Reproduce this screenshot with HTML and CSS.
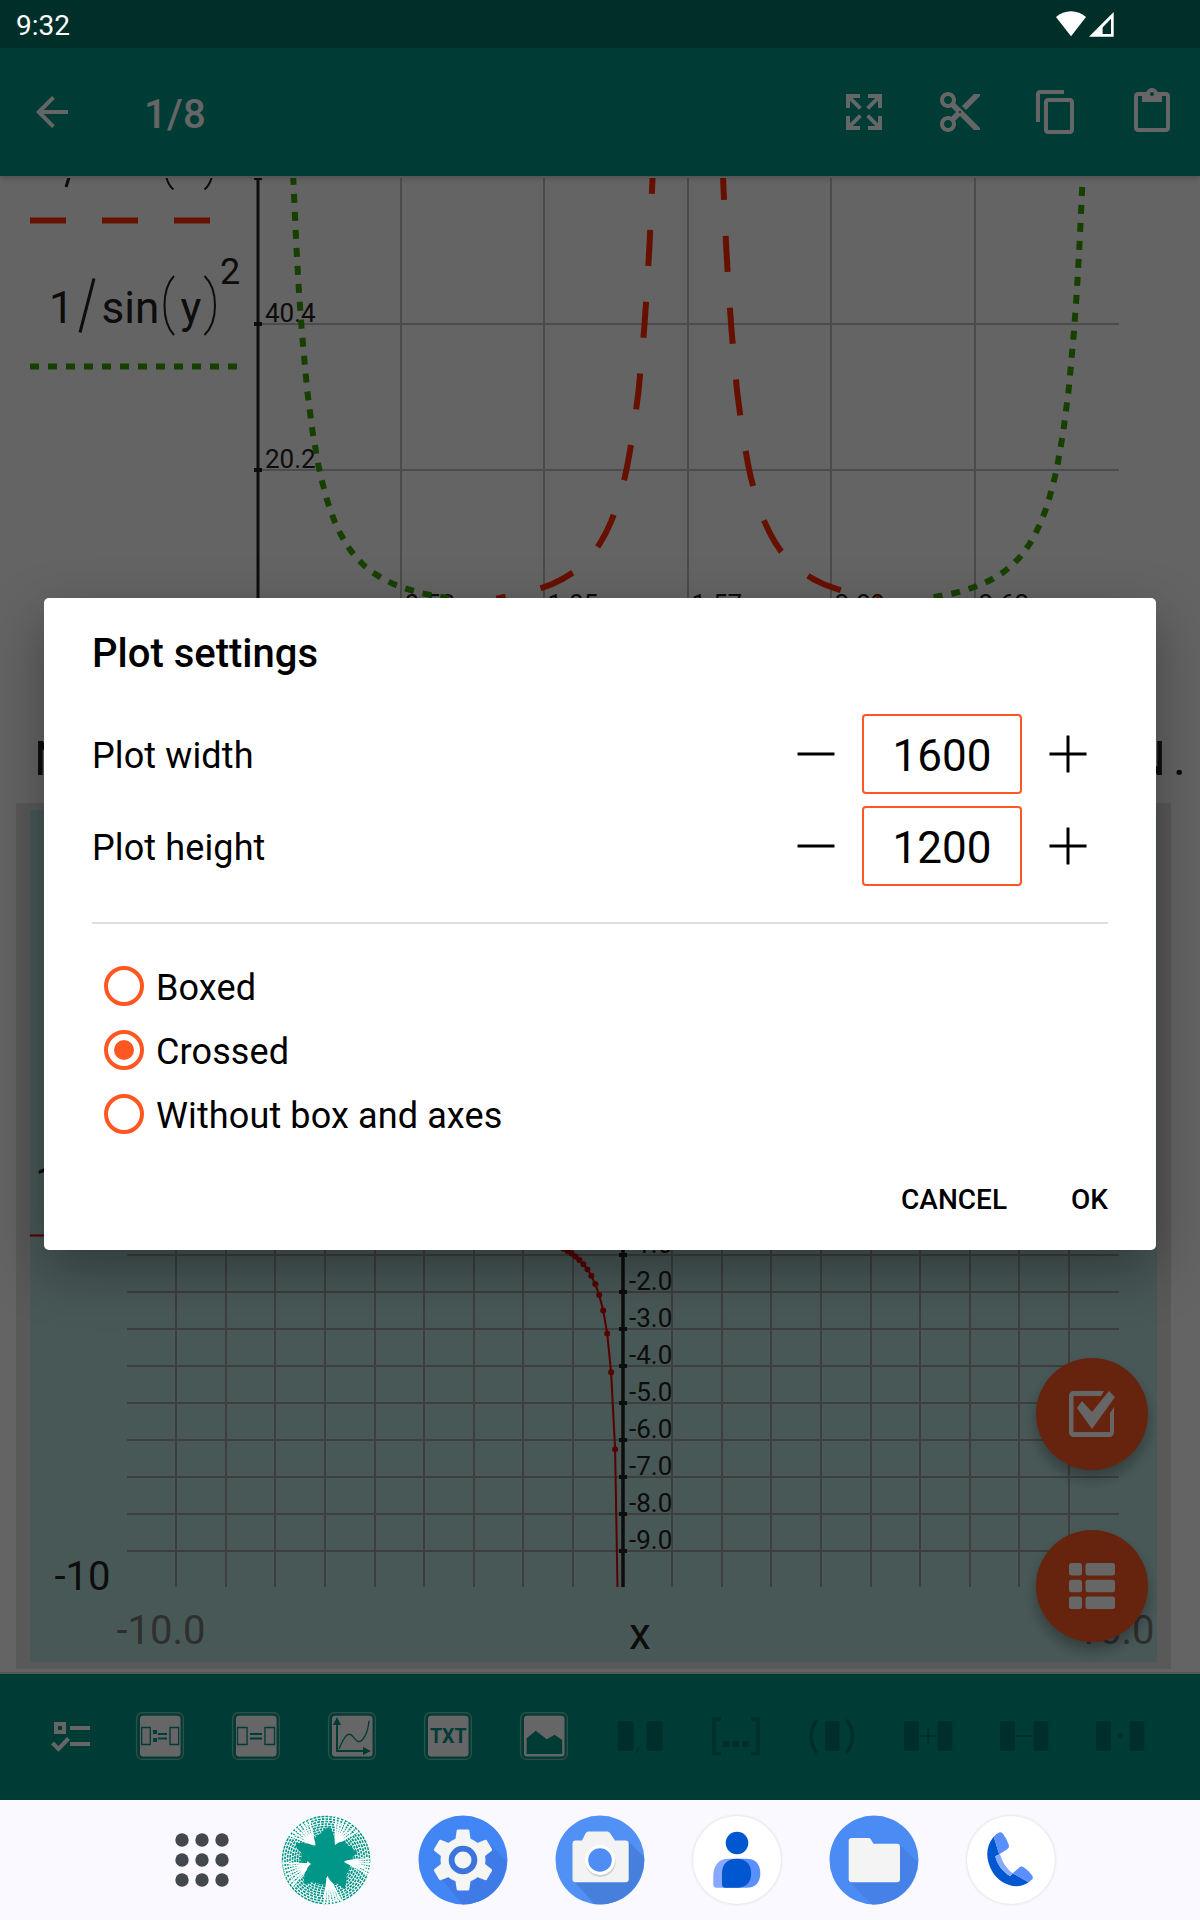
FILE: index.html
```html
<!DOCTYPE html>
<html lang="en">
<head>
<meta charset="utf-8">
<title>Plot settings</title>
<link rel="stylesheet" href="styles.css">
</head>
<body>
<div class="screen">
  <header class="status">
    <span class="clock">9:32</span>
    <svg class="signals" width="58" height="26" viewBox="0 0 58 26" fill="#fff">
      <path d="M15 25.2L0 6C4.300 2.400 9.300 .3 15 .3s10.700 2.100 15 5.700z"/>
      <path fill-rule="evenodd" d="M57.700 1v24.700H33zM55 7.800l-8.400 8.800V23H55z"/>
    </svg>
  </header>

  <nav class="appbar">
    <svg class="icon" viewBox="0 0 24 24"><path d="M20 11H7.830l5.590-5.590L12 4l-8 8 8 8 1.410-1.410L7.830 13H20v-2z"/></svg>
    <span class="count">1/8</span>
    <div class="actions">
      <svg class="icon" viewBox="0 0 24 24"><path d="M9.500 13.090L10.910 14.500L6.410 19H10V21H3V14H5V17.590L9.500 13.090M10.910 9.500L9.500 10.910L5 6.410V10H3V3H10V5H6.410L10.910 9.500M14.500 13.090L19 17.590V14H21V21H14V19H17.590L13.090 14.500L14.500 13.090M13.090 9.500L17.590 5H14V3H21V10H19V6.410L14.500 10.910L13.090 9.500Z"/></svg>
      <svg class="icon" viewBox="0 0 24 24"><path d="M9.640 7.640c.23-.5.36-1.050.36-1.640 0-2.210-1.790-4-4-4S2 3.790 2 6s1.790 4 4 4c.59 0 1.140-.13 1.640-.36L10 12l-2.360 2.360C7.140 14.130 6.590 14 6 14c-2.210 0-4 1.790-4 4s1.790 4 4 4 4-1.790 4-4c0-.59-.13-1.140-.36-1.640L12 14l7 7h3v-1L9.640 7.640zM6 8c-1.100 0-2-.89-2-2s.9-2 2-2 2 .89 2 2-.9 2-2 2zm0 12c-1.100 0-2-.89-2-2s.9-2 2-2 2 .89 2 2-.9 2-2 2zm6-7.500c-.28 0-.5-.22-.5-.5s.22-.5.5-.5.5.22.5.5-.22.5-.5.5zM19 3l-6 6 2 2 7-7V3z"/></svg>
      <svg class="icon" viewBox="0 0 24 24"><path d="M16 1H4c-1.100 0-2 .9-2 2v14h2V3h12V1zm3 4H8c-1.100 0-2 .9-2 2v14c0 1.100.9 2 2 2h11c1.100 0 2-.9 2-2V7c0-1.100-.9-2-2-2zm0 16H8V7h11v14z"/></svg>
      <svg class="icon" viewBox="0 0 24 24"><path d="M19 2h-4.180C14.400.84 13.300 0 12 0c-1.300 0-2.400.84-2.820 2H5c-1.100 0-2 .9-2 2v16c0 1.100.9 2 2 2h14c1.100 0 2-.9 2-2V4c0-1.100-.9-2-2-2zm-7 0c.55 0 1 .45 1 1s-.45 1-1 1-1-.45-1-1 .45-1 1-1zm7 18H5V4h2v3h10V4h2v16z"/></svg>
    </div>
  </nav>

  <main class="sheet">
    <svg class="plot" width="1200" height="522" viewBox="0 178 1200 522">
      <g class="grid">
        <path d="M401 178V616M544 178V616M688 178V616M831 178V616M975 178V616M258 324H1119M258 470H1119"/>
      </g>
      <path class="axis" d="M258 178V616"/>
      <path class="tick" d="M254 178H262M254 324H262M254 470H262"/>
      <g class="tick-text">
        <text x="265" y="321.700">40.4</text>
        <text x="265" y="468">20.2</text>
        <text x="404.500" y="612.500">0.52</text>
        <text x="547.500" y="612.500">1.05</text>
        <text x="691.500" y="612.500">1.57</text>
        <text x="834.500" y="612.500">2.09</text>
        <text x="978.500" y="612.500">2.62</text>
      </g>
      <g class="red-dash">
        <path d="M653.300 158L652.200 185.900 649.500 244.800 646.800 292.300 644 331.200 638.600 390.500 633.100 432.800 627.600 464.200 624.900 476.900 619.400 497.900 615.300 510.600 611.200 521.400 605.700 533.200 600.200 542.900 594.800 551 589.300 557.800 581.100 566 572.900 572.500 561.900 579.300 551 584.600 537.300 589.500 523.600 593.300 496.300 598.600"/>
        <path d="M722.500 164L723.400 185.900 726.100 244.800 728.800 292.300 731.600 331.200 737 390.500 742.500 432.800 748 464.200 750.700 476.900 756.200 497.900 760.300 510.600 764.400 521.400 769.900 533.200 775.400 542.900 780.800 551 786.300 557.800 794.500 566 802.700 572.500 813.700 579.300 824.600 584.600 838.300 589.500 852 593.300 879.300 598.600"/>
        <path d="M30 220.500H210"/>
      </g>
      <g class="green-dash">
        <path d="M293.200 176L293.600 185.900 296.300 244.800 299 292.300 301.800 331.200 307.200 390.500 312.700 432.800 318.200 464.200 320.900 476.900 326.400 497.900 330.500 510.600 334.600 521.400 340.100 533.200 345.600 542.900 351 551 356.500 557.800 364.700 566 372.900 572.500 383.900 579.300 394.800 584.600 408.500 589.500 422.200 593.300 449.500 598.600"/>
        <path d="M1082.200 187L1079.500 244.800 1076.800 292.300 1074 331.200 1068.600 390.500 1063.100 432.800 1057.600 464.200 1054.900 476.900 1049.400 497.900 1045.300 510.600 1041.200 521.400 1035.700 533.200 1030.200 542.900 1024.800 551 1019.300 557.800 1011.100 566 1002.900 572.500 991.900 579.300 981 584.600 967.300 589.500 953.600 593.300 926.300 598.600"/>
        <path d="M30 366.500H240"/>
      </g>
      <g class="formula">
        <path d="M69.500 176L66 187"/>
        <path class="paren" d="M166 176Q168 185 173.500 189.500M212 176Q210 185 204.500 189.500"/>
        <text x="49" y="322.700">1</text>
        <path d="M94 278.500L80 332.500"/>
        <text x="101.500" y="322.700">sin</text>
        <path class="paren" d="M174 276Q164.500 286 164.500 305.500T174 335M204.500 276Q215 286 215 305.500T204.500 335"/>
        <text x="180.500" y="322.700">y</text>
        <text class="power" x="220" y="283.800">2</text>
      </g>
    </svg>

    <p class="note"><span>N</span><span>N<span class="stop">.</span></span></p>

    <section class="card">
      <svg class="plot" width="1127" height="852" viewBox="30 810 1127 852">
        <g class="grid2">
          <path d="M176 900V1587M226 900V1587M275 900V1587M325 900V1587M375 900V1587M424 900V1587M474 900V1587M523 900V1587M573 900V1587M672 900V1587M722 900V1587M771 900V1587M821 900V1587M871 900V1587M920 900V1587M970 900V1587M1019 900V1587M1069 900V1587M127 1255H1119M127 1292H1119M127 1329H1119M127 1366H1119M127 1403H1119M127 1440H1119M127 1477H1119M127 1514H1119M127 1551H1119"/>
        </g>
        <path class="axis2" d="M623 900V1587"/>
        <path class="tick" d="M619 1255H627M619 1292H627M619 1329H627M619 1366H627M619 1403H627M619 1440H627M619 1477H627M619 1514H627M619 1551H627"/>
        <g class="tick-text">
          <text x="629" y="1253">-1.0</text>
          <text x="629" y="1290">-2.0</text>
          <text x="629" y="1327">-3.0</text>
          <text x="629" y="1364">-4.0</text>
          <text x="629" y="1401">-5.0</text>
          <text x="629" y="1438">-6.0</text>
          <text x="629" y="1475">-7.0</text>
          <text x="629" y="1512">-8.0</text>
          <text x="629" y="1549">-9.0</text>
        </g>
        <path class="curve" d="M559.600 1246.900L563.600 1248.800 567.600 1251 571.500 1253.600 575.500 1256.500 579.400 1260 583.400 1264.300 587.400 1269.400 591.300 1275.800 595.300 1284.100 599.200 1295.100 603.200 1310.500 607.200 1333.600 611.100 1372.200 615.100 1449.300 617.500 1587"/>
        <path class="dots" d="M559.600 1246.900h0M563.600 1248.800h0M567.600 1251h0M571.500 1253.600h0M575.500 1256.500h0M579.400 1260h0M583.400 1264.300h0M587.400 1269.400h0M591.300 1275.800h0M595.300 1284.100h0M599.200 1295.100h0M603.200 1310.500h0M607.200 1333.600h0M611.100 1372.200h0M615.100 1449.300h0"/>
        <path class="curve" d="M30 1235.500H60"/>
        <g class="formula">
          <text x="35" y="1198">1</text>
          <text class="bound" x="54.500" y="1590">-10</text>
          <text x="629" y="1649">x</text>
          <text class="bound dim" x="116.500" y="1644">-10.0</text>
          <text class="bound dim" x="1154.500" y="1644" text-anchor="end">10.0</text>
        </g>
      </svg>
    </section>

    <div class="fabs">
      <div class="fab">
        <svg width="46" height="46" viewBox="0 0 46 46" fill="#fff">
          <path d="M35 0H5C2 0 0 2 0 5v36c0 3 2 5 5 5h35c3 0 5-2 5-5V16l-4 6v19H4.500V5H32z"/>
          <path d="M8 17l5-7 10 11L40 0l6 6-23 32z"/>
        </svg>
      </div>
      <div class="fab">
        <svg width="46" height="46" viewBox="0 0 46 46" fill="#fff">
          <rect width="13" height="12.500" rx="2.500"/><rect x="16.500" width="29.500" height="12.500" rx="2.500"/>
          <rect y="16.700" width="13" height="12.500" rx="2.500"/><rect x="16.500" y="16.700" width="29.500" height="12.500" rx="2.500"/>
          <rect y="33.500" width="13" height="12.500" rx="2.500"/><rect x="16.500" y="33.500" width="29.500" height="12.500" rx="2.500"/>
        </svg>
      </div>
    </div>
  </main>

  <nav class="toolbar">
    <svg class="tool" viewBox="0 0 48 48">
      <path fill="#fff" fill-rule="evenodd" d="M14 10h12v12H14zM18 14v4h4v-4zM30 14h20v4H30zM30 30h20v4H30z"/>
      <path fill="none" stroke="#fff" stroke-width="4" d="M12.500 31l6 6L28.500 26.500"/>
    </svg>
    <svg class="tool" viewBox="0 0 48 48">
      <rect class="frame" x=".6" y=".6" width="46.800" height="46.800" rx="6"/><rect class="tile" x="4" y="3.700" width="40.500" height="40.800" rx="3"/>
      <path class="ink" d="M5.700 15.500h8.600v17H5.700zM34 15.500h8.600v17H34z"/>
      <path class="inkfill" d="M17 18h4v4h-4zM17 26h4v4h-4zM22 21h9v2h-9zM22 25.500h9v2h-9z"/>
    </svg>
    <svg class="tool" viewBox="0 0 48 48">
      <rect class="frame" x=".6" y=".6" width="46.800" height="46.800" rx="6"/><rect class="tile" x="4" y="3.700" width="40.500" height="40.800" rx="3"/>
      <path class="ink" d="M5.500 15.500h9.600v17H5.500zM32.900 15.500h9.600v17h-9.600z"/>
      <path class="inkfill" d="M18 21h12v2H18zM18 25.500h12v2H18z"/>
    </svg>
    <svg class="tool" viewBox="0 0 48 48">
      <rect class="frame" x=".6" y=".6" width="46.800" height="46.800" rx="6"/><rect class="tile" x="4" y="3.700" width="40.500" height="40.800" rx="3"/>
      <path class="ink axes" d="M9 12v26.900H36"/>
      <path class="ink" d="M11 37C16 25 20 19 24.500 24 29 29.500 31 32 35 27 39 22 40.500 15 41 8.700"/>
      <path class="inkfill" d="M9 5l4 8H5zM43 39l-8 4v-8z"/>
    </svg>
    <svg class="tool" viewBox="0 0 48 48">
      <rect class="frame" x=".6" y=".6" width="46.800" height="46.800" rx="6"/><rect class="tile" x="4" y="3.700" width="40.500" height="40.800" rx="3"/>
      <text class="txt" x="24.200" y="31" text-anchor="middle">TXT</text>
    </svg>
    <svg class="tool" viewBox="0 0 48 48">
      <rect class="frame" x=".6" y=".6" width="46.800" height="46.800" rx="6"/><rect class="tile" x="4" y="3.700" width="40.500" height="40.800" rx="3"/>
      <path class="inkfill" d="M6.600 26.300l9.200-7.600 11 8.600 7.700-4.600 7.700 5.300v14H6.600z"/>
    </svg>
    <svg class="tool off" viewBox="0 0 48 48"><rect x="1.600" y="9" width="16" height="30" rx="2"/><rect x="30.600" y="9" width="16" height="30" rx="2"/><path class="thin" d="M22.500 35q0 3-2.500 6"/></svg>
    <svg class="tool off" viewBox="0 0 48 48"><path class="thick" d="M9 7H2v34.500h7M39 7h7v34.500h-7"/><path d="M11 29h6.500v6H11zM20.500 29H27v6h-6.500zM30 29h6.500v6H30z"/></svg>
    <svg class="tool off" viewBox="0 0 48 48"><rect x="17" y="9" width="14.500" height="30" rx="2"/><path class="thick" d="M9 7.500q-12 17 0 33.500M38.500 7.500q12 17 0 33.500"/></svg>
    <svg class="tool off" viewBox="0 0 48 48"><rect x="0" y="9" width="15" height="30" rx="2"/><rect x="33.500" y="9" width="15" height="30" rx="2"/><path class="thin" d="M16 24h17M24.200 16v16"/></svg>
    <svg class="tool off" viewBox="0 0 48 48"><rect x="0" y="9" width="15" height="30" rx="2"/><rect x="33.500" y="9" width="15" height="30" rx="2"/><path class="thin" d="M16 24h17"/></svg>
    <svg class="tool off" viewBox="0 0 48 48"><rect x="0" y="9" width="15" height="30" rx="2"/><rect x="33.500" y="9" width="15" height="30" rx="2"/><path d="M22 21.500h4.500v4.500H22z"/></svg>
  </nav>

  <footer class="dock">
    <svg class="drawer" width="56" height="56" viewBox="0 0 56 56" fill="#43474e">
      <circle cx="8" cy="8" r="6.700"/><circle cx="28" cy="8" r="6.700"/><circle cx="48" cy="8" r="6.700"/>
      <circle cx="8" cy="28" r="6.700"/><circle cx="28" cy="28" r="6.700"/><circle cx="48" cy="28" r="6.700"/>
      <circle cx="8" cy="48" r="6.700"/><circle cx="28" cy="48" r="6.700"/><circle cx="48" cy="48" r="6.700"/>
    </svg>
    <svg class="app" viewBox="0 0 90 90">
      <circle cx="45" cy="45" r="44.500" fill="#fff"/>
      <g fill="none" stroke="#009688">
        <circle cx="45" cy="45" r="43.500" stroke-width="1.500" stroke-dasharray="3 1"/>
        <circle cx="45" cy="45" r="41" stroke-width="1.700" stroke-dasharray="2.500 1.200"/>
        <circle cx="45" cy="45" r="38.500" stroke-width="1.700" stroke-dasharray="3 1.100"/>
        <circle cx="45" cy="45" r="36" stroke-width="1.700" stroke-dasharray="2.500 1"/>
        <circle cx="45" cy="45" r="33.500" stroke-width="1.800" stroke-dasharray="3 .9"/>
        <circle cx="45" cy="45" r="31" stroke-width="1.800" stroke-dasharray="2.500 .9"/>
        <circle cx="45" cy="45" r="28.500" stroke-width="1.900" stroke-dasharray="3 .8"/>
        <circle cx="45" cy="45" r="26" stroke-width="2" stroke-dasharray="3 .7"/>
        <circle cx="45" cy="45" r="22" stroke-width="6"/>
      </g>
      <g fill="none" stroke="#fff" stroke-width="1.700">
        <path d="M54 30L55 2M54 30L59 3.500M54 30L63 5M54 30L66.500 7M54 30L70 9.500M54 30L73.500 12.500M54 30L77 16"/>
        <path d="M63.300 46.300L89 43.500M63.300 46.300L89 46.500M63.300 46.300L89 49.500M63.300 46.300L88.500 52.500M63.300 46.300L88 55.500M63.300 46.300L87 59"/>
        <path d="M46.700 60.700L43 89M46.700 60.700L46.500 89M46.700 60.700L50 89M46.700 60.700L53.500 88.500M46.700 60.700L57 87.500M46.700 60.700L60.500 86.500"/>
        <path d="M30 49L1 48M30 49L1.500 52M30 49L2.500 56M30 49L4 60M30 49L6 64M30 49L8.500 68M30 49L11 71.500"/>
        <path d="M34 30.700L8 20M34 30.700L11 16.500M34 30.700L14 13.500M34 30.700L17 11M34 30.700L20.500 8.500M34 30.700L24 6.500M34 30.700L28 5"/>
      </g>
      <path fill="#009688" d="M48.300 12.300Q53 15 54 30Q59 26 63.300 26.700 66 31 70 31.500 72 35 76.700 37.300 71 44 63.300 46.300 66 53 65 59 67 68 62.700 74 57 68 53.300 68.300 48 66 46.700 60.700 44 66 41.700 67.300 35 65 30 67.300 25 70 22.700 68.300 23 60 25 59 26 51 30 49 21 43 20 37.300 14 33 15 28.300 25 27 34 30.700 36 26 36.500 23 36 19 40 18.500 42 15 44 14.500 46 12 48.300 12.300z"/>
    </svg>
    <svg class="app" viewBox="0 0 90 90">
      <circle cx="45" cy="45" r="44.500" fill="#4285f4"/>
      <path fill="#3e7be7" d="M73 30L88.500 46a44 44 0 0 1-44 43.500L23 63z"/>
      <g fill="#f5f5f5">
        <circle cx="45" cy="45" r="22.500"/>
        <path id="tooth" d="M38.700 15.500q.3-1 1.300-1h10q1 0 1.300 1L53 27v36l-1.700 11.500q-.3 1-1.300 1H40q-1 0-1.300-1L37 63V27z"/>
        <use href="#tooth" transform="rotate(60 45 45)"/><use href="#tooth" transform="rotate(120 45 45)"/>
      </g>
      <circle cx="45" cy="45" r="14.300" fill="#3b74dc"/><circle cx="45" cy="45" r="8.500" fill="#f5f5f5"/>
    </svg>
    <svg class="app" viewBox="0 0 90 90">
      <circle cx="45" cy="45" r="44.500" fill="#5190f5"/>
      <path fill="#4680dc" d="M74 27l15 15A44.500 44.500 0 0 1 39 89L19 66z"/>
      <path fill="#f3f3f3" d="M20.500 25.500H27l3.500-7q1-2 3-2h19q1.500 0 2.500 1.500l5 7.500h10.700q3 0 3 3v35.800q0 3-3 3H20.500q-3 0-3-3V28.500q0-3 3-3z"/>
      <circle cx="45.500" cy="47" r="15" fill="#bbb" opacity=".6"/>
      <circle cx="45" cy="45" r="15" fill="#fff"/><circle cx="45" cy="45" r="11.800" fill="#4f8df5"/>
    </svg>
    <svg class="app pale" viewBox="0 0 90 90">
      <circle cx="45" cy="45" r="44" fill="#fff"/>
      <circle cx="45" cy="28" r="11.300" fill="#0057d0"/>
      <path fill="#86a8ff" d="M45 43.700H36c-10 0-14.700 8-14.700 17v8.500q0 3.500 3.500 3.500H45z"/>
      <path fill="#5a8fff" d="M45 43.700h9.500c9.500 0 13.800 6 13.800 14.500s-4.300 14.500-13.800 14.500H45z"/>
      <path fill="#0057d0" d="M45 43.700c9 0 14.200 5.500 14.200 14.500S54 72.700 45 72.700H33.500q-3.500 0-3.500-3.500v-11c0-9 5-14.500 15-14.500z"/>
    </svg>
    <svg class="app" viewBox="0 0 90 90">
      <circle cx="45" cy="45" r="44.500" fill="#4b8bf4"/>
      <path fill="#4581e6" d="M71 30l17.500 17A44.500 44.500 0 0 1 43 89.500L21 67z"/>
      <path fill="#f4f4f4" d="M22.700 23h17.100q1.200 0 2 1.200l2.700 4.500H68q3 0 3 3v32.600q0 3-3 3H22.700q-3 0-3-3V26q0-3 3-3z"/>
    </svg>
    <svg class="app pale" viewBox="0 0 90 90">
      <circle cx="45" cy="45" r="44" fill="#fff"/>
      <path fill="#0057d0" d="M27.700 21.700C19 32 19.500 45 26.700 57.300 34 69 50 76 62.700 67.300L46.700 58.300 44.300 61.300C36 56 31 49 29.300 41.300L33.300 39.300z"/>
      <path fill="#86a8ff" d="M29.300 41.300L34 39C36 46.500 40.500 53.500 46.700 58.300L44.300 61.300C36 56 31 49 29.300 41.300z"/>
      <path fill="#5a8fff" d="M27.700 21.700Q30 19 33 17.600q2.500-1 4 1.200Q41 24.500 42.700 29.500q1 3-1.500 4.700L33.300 39.300zM46.700 58.300l6.300-5.600q2.500-2.200 5-.2 4.500 3 8 7.700 2 3-.5 4.900l-2.800 2.200z"/>
    </svg>
  </footer>

  <div class="scrim">
    <div class="dialog" role="dialog">
      <h1>Plot settings</h1>
      <div class="row">
        <label>Plot width</label>
        <svg class="step" viewBox="0 0 40 40"><path d="M1.500 20H38.500"/></svg>
        <div class="field">1600</div>
        <svg class="step" viewBox="0 0 40 40"><path d="M1.500 20H38.500M20 1.500V38.500"/></svg>
      </div>
      <div class="row">
        <label>Plot height</label>
        <svg class="step" viewBox="0 0 40 40"><path d="M1.500 20H38.500"/></svg>
        <div class="field">1200</div>
        <svg class="step" viewBox="0 0 40 40"><path d="M1.500 20H38.500M20 1.500V38.500"/></svg>
      </div>
      <div class="divider"></div>
      <div class="radios">
        <div class="radio"><i></i><span>Boxed</span></div>
        <div class="radio on"><i></i><span>Crossed</span></div>
        <div class="radio"><i></i><span>Without box and axes</span></div>
      </div>
      <div class="buttons"><span>CANCEL</span><span>OK</span></div>
    </div>
  </div>
</div>
</body>
</html>
```
FILE: styles.css
```css
* { box-sizing: border-box; }

body {
  margin: 0;
  font-family: Roboto, "Liberation Sans", sans-serif;
  color: #000;
}

svg { display: block; flex: none; }

.screen {
  position: relative;
  display: flex;
  flex-direction: column;
  width: 1200px;
  height: 1920px;
  overflow: hidden;
  background: #fafafa;
}

/* status bar stays bright above the scrim */
.status {
  position: relative;
  z-index: 3;
  display: flex;
  justify-content: space-between;
  height: 48px;
  padding: 11px 86px 0 16px;
  background: #002f2a;
  color: #fff;
}
.clock { padding-top: 1px; font-size: 28px; line-height: 28px; }

.appbar {
  position: relative;
  z-index: 1;
  display: flex;
  align-items: center;
  height: 128px;
  padding: 0 24px 0 28px;
  background: #009688;
  color: #fff;
  box-shadow: 0 2px 6px rgba(0, 0, 0, .22);
}
.icon { width: 48px; height: 48px; fill: #fff; }
.count {
  margin-left: 68px;
  padding-top: 5px;
  font-size: 40px;
  font-weight: 500;
  letter-spacing: .3px;
}
.actions { display: flex; gap: 48px; margin-left: auto; }

.sheet {
  position: relative;
  height: 1498px;
  padding-top: 2px;
  overflow: hidden;
  border-bottom: 2px solid #dadada;
}

.plot { overflow: hidden; }
.plot path { fill: none; }
.grid path { stroke: #bcbcbc; stroke-width: 2; }
.grid2 path { stroke: #9c9c9c; stroke-width: 2; }
.axis { stroke: #212121; stroke-width: 3; }
.axis2 { stroke: #212121; stroke-width: 3.5; }
.tick { stroke: #212121; stroke-width: 4; }
.tick-text { font-size: 26px; fill: #212121; }
.red-dash { stroke: #ff2800; stroke-width: 6; stroke-dasharray: 36 36; }
.green-dash { stroke: #3aa000; stroke-width: 6; stroke-dasharray: 9 9; }
.formula { font-size: 44px; fill: #212121; stroke-width: 3; }
.formula path { stroke: #212121; }
.formula .paren { stroke-width: 2; }
.formula .power { font-size: 36px; }
.formula .bound { font-size: 40px; }
.formula .dim { fill: #757575; }
.curve { stroke: #d90000; stroke-width: 2; }
.dots { stroke: #d90000; stroke-width: 6; stroke-linecap: round; }

.note {
  display: flex;
  justify-content: space-between;
  height: 103px;
  margin: 0;
  padding: 30px 14px 0 34px;
  font-size: 49px;
  line-height: 58px;
  color: #212121;
}
.stop { margin-left: 7px; }

.card {
  width: 1155px;
  margin-left: 16px;
  padding: 7px 14px;
  background: #dfdfdf;
}
.card .plot { background: #b4ddda; }

.fabs {
  position: absolute;
  right: 52px;
  top: 1182px;
  display: flex;
  flex-direction: column;
  gap: 60px;
}
.fab {
  display: grid;
  place-items: center;
  width: 112px;
  height: 112px;
  border-radius: 50%;
  background: #ff5722;
  box-shadow: 0 8px 14px rgba(0, 0, 0, .3);
}

.toolbar {
  display: flex;
  align-items: flex-start;
  gap: 48px;
  height: 126px;
  padding: 38px 0 0 40px;
  background: #009688;
}
.tool { width: 48px; height: 48px; overflow: visible; }
.frame { fill: none; stroke: #7fc0ba; stroke-width: 1.3; }
.tile { fill: #fff; }
.ink { fill: none; stroke: #009688; stroke-width: 1.3; }
.axes { stroke-width: 2; }
.inkfill { fill: #009688; }
.txt { font-size: 19.5px; font-weight: 700; fill: #009688; }
.off { fill: #00766b; stroke: none; }
.off .thin { fill: none; stroke: #00766b; stroke-width: 1.8; }
.off .thick { fill: none; stroke: #00766b; stroke-width: 3.5; }

.dock {
  position: relative;
  z-index: 3;
  display: flex;
  align-items: center;
  gap: 47px;
  height: 120px;
  padding: 0 0 1px 173.5px;
  background: #faf9ff;
}
.drawer { margin-right: 4.5px; }
.app { width: 90px; height: 90px; }
.pale { filter: drop-shadow(0 0 1.5px rgba(0, 0, 0, .16)); }

.scrim {
  position: absolute;
  z-index: 2;
  inset: 0 0 120px;
  display: flex;
  align-items: center;
  justify-content: center;
  padding-top: 48px;
  background: rgba(0, 0, 0, .6);
}
.dialog {
  width: 1112px;
  height: 652px;
  padding: 32px 48px 0;
  border-radius: 5px;
  background: #fff;
  box-shadow: 0 20px 54px rgba(0, 0, 0, .34);
}
.dialog h1 {
  margin: 0 0 36px;
  font-size: 40px;
  line-height: 48px;
  font-weight: 500;
}
.row {
  display: flex;
  align-items: center;
  height: 80px;
  margin-bottom: 12px;
  padding-right: 20px;
}
.row label {
  margin-right: auto;
  padding-top: 4px;
  font-size: 36px;
  letter-spacing: .12px;
}
.step { width: 40px; height: 40px; fill: none; stroke: #000; stroke-width: 3; }
.field {
  width: 160px;
  height: 80px;
  margin: 0 26px;
  padding-top: 2px;
  border: 2px solid #ff5722;
  border-radius: 4px;
  font-size: 44px;
  line-height: 76px;
  text-align: center;
}
.divider { height: 2px; margin-top: 36px; background: #dfdfdf; }
.radios { padding: 30px 0 0 12px; }
.radio {
  display: flex;
  align-items: center;
  gap: 12px;
  height: 64px;
  font-size: 36px;
  letter-spacing: .12px;
}
.radio i {
  display: grid;
  place-items: center;
  width: 40px;
  height: 40px;
  border: 4px solid #ff5722;
  border-radius: 50%;
}
.radio.on i::after {
  content: "";
  width: 20px;
  height: 20px;
  border-radius: 50%;
  background: #ff5722;
}
.radio span { padding-top: 3px; }
.buttons {
  display: flex;
  justify-content: flex-end;
  gap: 64px;
  margin-top: 37px;
  font-size: 28px;
  line-height: 34px;
  font-weight: 500;
}
```
